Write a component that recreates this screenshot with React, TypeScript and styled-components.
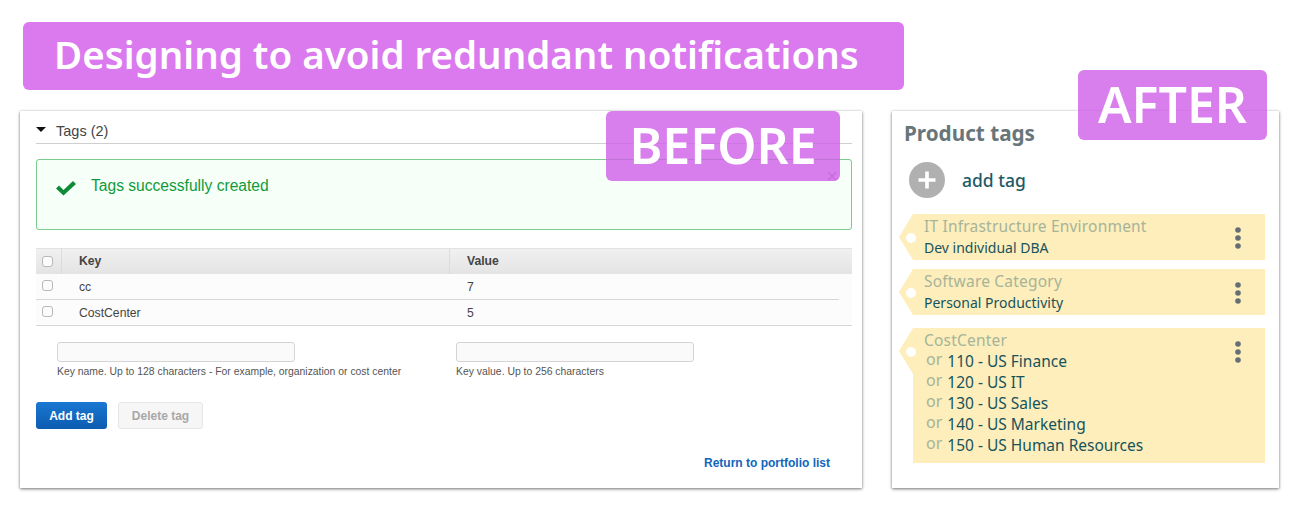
import styled, { createGlobalStyle } from 'styled-components'

const GlobalStyle = createGlobalStyle`
  html, body {
    margin: 0;
    padding: 0;
    background: #ffffff;
  }
`

const BADGE_BG = 'rgba(208, 94, 232, 0.8)'
const UI_SANS = '"Liberation Sans", Arial, sans-serif'
const TITLE_SANS = '"Noto Sans", "Open Sans", sans-serif'
const TAG_SANS = '"Noto Sans", "Open Sans", sans-serif'

const Page = styled.div`
  position: relative;
  width: 1296px;
  height: 512px;
  overflow: hidden;
  padding: 22px 0 0 20px;
  box-sizing: border-box;
`

const TitleBanner = styled.h1`
  width: 881px;
  height: 68px;
  margin: 0 0 21px 3px;
  padding: 0 0 4px 31px;
  box-sizing: border-box;
  display: flex;
  align-items: center;
  background: #da7aee;
  border-radius: 6px;
  color: #ffffff;
  font: 600 38.5px ${TITLE_SANS};
  white-space: nowrap;
`

const Cards = styled.div`
  display: flex;
  gap: 30px;
`

const Card = styled.section<{ $width: number }>`
  position: relative;
  width: ${(p) => p.$width}px;
  height: 377px;
  box-sizing: border-box;
  background: #ffffff;
  box-shadow: 0 1px 3px rgba(0, 0, 0, 0.55), 0 0 1px rgba(0, 0, 0, 0.12);
`

const Badge = styled.div<{ $top: number; $right: number; $width: number }>`
  position: absolute;
  top: ${(p) => p.$top}px;
  right: ${(p) => p.$right}px;
  width: ${(p) => p.$width}px;
  height: 70px;
  padding-bottom: 3px;
  box-sizing: border-box;
  display: flex;
  align-items: center;
  justify-content: center;
  background: ${BADGE_BG};
  border-radius: 6px;
  color: #ffffff;
  font: 600 50px ${TITLE_SANS};
`

const BeforeBody = styled.div`
  padding: 10px 10px 0 16px;
  font-family: ${UI_SANS};
  color: #444444;
`

const SectionHead = styled.div`
  display: flex;
  align-items: flex-start;
  height: 22px;
  line-height: 20px;
  border-bottom: 1px solid #cfcfcf;
  font-size: 14.5px;
  color: #444444;
`

const Caret = styled.span`
  width: 0;
  height: 0;
  margin: 6px 10px 0 0;
  border-left: 5.5px solid transparent;
  border-right: 5.5px solid transparent;
  border-top: 5px solid #111111;
`

const Alert = styled.div`
  position: relative;
  height: 71px;
  margin-top: 15px;
  box-sizing: border-box;
  padding: 17px 0 0 18px;
  display: flex;
  align-items: flex-start;
  gap: 14px;
  background: #f7fff9;
  border: 1px solid #7acb8c;
  border-radius: 3px;
  color: #0f9b3c;
  font-size: 15.6px;
  line-height: 18px;
`

const AlertClose = styled.span`
  position: absolute;
  top: 6px;
  right: 13px;
  font-size: 20px;
  line-height: 20px;
  color: #a9a9a9;
`

const Table = styled.div`
  margin-top: 18px;
  font-size: 12.2px;
`

const HeadRow = styled.div`
  display: grid;
  grid-template-columns: 25px 388px 1fr;
  height: 25px;
  align-items: center;
  border-top: 1px solid #e2e2e2;
  background: linear-gradient(#f0f0f0, #e4e4e4);
  font-weight: 700;
  color: #444444;
`

const HeadCell = styled.div`
  height: 100%;
  display: flex;
  align-items: center;
  padding: 0 0 1px 17px;
  box-sizing: border-box;
  border-left: 1px solid #dcdcdc;
`

const CheckCell = styled.div<{ $lift?: number }>`
  height: 100%;
  display: flex;
  align-items: center;
  padding: 0 0 ${(p) => p.$lift ?? 0}px 6px;
  box-sizing: border-box;
`

const Checkbox = styled.span`
  width: 9px;
  height: 9px;
  border: 1px solid #b8b8b8;
  border-radius: 3px;
  background: #fbfbfb;
`

const Row = styled.div<{ $inset?: boolean }>`
  position: relative;
  display: grid;
  grid-template-columns: 25px 388px 1fr;
  height: 26px;
  align-items: center;
  background: #fcfcfc;
  color: #444444;

  &::after {
    content: '';
    position: absolute;
    left: 0;
    right: ${(p) => (p.$inset ? 13 : 0)}px;
    bottom: 0;
    height: 1px;
    background: #d6d6d6;
  }
`

const RowCell = styled.div`
  padding-left: 18px;
`

const Fields = styled.div`
  display: grid;
  grid-template-columns: 399px 1fr;
  margin: 16px 0 0 21px;
`

const Field = styled.div`
  display: flex;
  flex-direction: column;
  gap: 3px;
`

const TextInput = styled.div`
  width: 238px;
  height: 20px;
  box-sizing: border-box;
  background: #fafafa;
  border: 1px solid #d4d4d4;
  border-radius: 3px;
`

const Hint = styled.div`
  font-size: 10.4px;
  line-height: 13px;
  color: #555555;
  white-space: nowrap;
`

const Buttons = styled.div`
  display: flex;
  gap: 11px;
  margin-top: 24px;
`

const PrimaryButton = styled.div`
  width: 71px;
  height: 27px;
  display: flex;
  align-items: center;
  justify-content: center;
  border-radius: 3px;
  background: linear-gradient(#1a78d2, #0b5cb0);
  color: #ffffff;
  font-size: 12px;
  font-weight: 700;
`

const DisabledButton = styled.div`
  width: 85px;
  height: 27px;
  box-sizing: border-box;
  display: flex;
  align-items: center;
  justify-content: center;
  border: 1px solid #e6e6e6;
  border-radius: 3px;
  background: #f6f6f6;
  color: #a8a8a8;
  font-size: 12px;
  font-weight: 700;
`

const FooterLink = styled.div`
  margin: 27px 22px 0 0;
  text-align: right;
  color: #1166bb;
  font-size: 12px;
  font-weight: 700;
`

const AfterBody = styled.div`
  padding: 9px 14px 0 7px;
  font-family: ${TAG_SANS};
`

const ProductTitle = styled.h2`
  margin: 0 0 0 5px;
  color: #68767a;
  font: 700 20.7px/26px ${TAG_SANS};
`

const AddRow = styled.div`
  display: flex;
  align-items: center;
  gap: 17px;
  margin: 16px 0 16px 10px;
  color: #1f5a66;
  font-size: 17.5px;
  font-weight: 500;
`

const Tag = styled.div<{ $gap?: number }>`
  position: relative;
  display: flex;
  justify-content: space-between;
  margin-bottom: ${(p) => p.$gap ?? 9}px;
  padding: 3px 23px 0 25px;
  min-height: 46px;
  box-sizing: border-box;
  background: #fdeebb;
  clip-path: polygon(14px 0, 100% 0, 100% 100%, 14px 100%, 14px 46px, 0 23px);
`

const TagHole = styled.span`
  position: absolute;
  left: 7px;
  top: 19px;
  width: 10px;
  height: 10px;
  border-radius: 50%;
  background: #ffffff;
`

const TagKey = styled.div`
  color: #a6b49a;
  font-size: 15.5px;
  line-height: 19px;
  letter-spacing: 0.2px;
`

const TagValue = styled.div`
  color: #17535c;
  font-size: 14px;
  line-height: 24px;
`

const OrList = styled.div`
  margin: 1px 0 7px;
`

const OrRow = styled.div`
  display: flex;
  align-items: baseline;
  gap: 5px;
  height: 21px;
  line-height: 21px;
  margin-left: 2px;
  color: #17535c;
  font-size: 15.5px;
`

const OrWord = styled.span`
  color: #a6b49a;
  font-size: 16px;
  line-height: 16px;
  transform: translateY(-2px);
`

function CheckIcon(): JSX.Element {
  return (
    <svg width="22" height="16" viewBox="0 0 22 16" style={{ marginTop: 3 }}>
      <path d="M1 8.5 L4 5.5 L8.5 10 L18 1 L21 4 L8.5 15.5 Z" fill="#0e8a38" />
    </svg>
  )
}

function PlusCircle(): JSX.Element {
  return (
    <svg width="36" height="36" viewBox="0 0 36 36">
      <circle cx="18" cy="18" r="18" fill="#b0b0b0" />
      <path d="M18 9.5 V26.5 M9.5 18 H26.5" stroke="#ffffff" strokeWidth="3.6" />
    </svg>
  )
}

function Kebab(): JSX.Element {
  return (
    <svg width="8" height="24" viewBox="0 0 8 24" style={{ marginTop: 9, flexShrink: 0 }}>
      <circle cx="4" cy="4" r="2.8" fill="#666e75" />
      <circle cx="4" cy="12" r="2.8" fill="#666e75" />
      <circle cx="4" cy="20" r="2.8" fill="#666e75" />
    </svg>
  )
}

const costCenters = ['110 - US Finance', '120 - US IT', '130 - US Sales', '140 - US Marketing', '150 - US Human Resources']

export default function App(): JSX.Element {
  return (
    <Page>
      <GlobalStyle />
      <TitleBanner>Designing to avoid redundant notifications</TitleBanner>
      <Cards>
        <Card $width={842}>
          <BeforeBody>
            <SectionHead>
              <Caret />
              Tags (2)
            </SectionHead>
            <Alert>
              <CheckIcon />
              Tags successfully created
              <AlertClose>×</AlertClose>
            </Alert>
            <Table>
              <HeadRow>
                <CheckCell><Checkbox /></CheckCell>
                <HeadCell>Key</HeadCell>
                <HeadCell>Value</HeadCell>
              </HeadRow>
              <Row $inset>
                <CheckCell $lift={3}><Checkbox /></CheckCell>
                <RowCell>cc</RowCell>
                <RowCell>7</RowCell>
              </Row>
              <Row>
                <CheckCell $lift={3}><Checkbox /></CheckCell>
                <RowCell>CostCenter</RowCell>
                <RowCell>5</RowCell>
              </Row>
            </Table>
            <Fields>
              <Field>
                <TextInput />
                <Hint>Key name. Up to 128 characters - For example, organization or cost center</Hint>
              </Field>
              <Field>
                <TextInput />
                <Hint>Key value. Up to 256 characters</Hint>
              </Field>
            </Fields>
            <Buttons>
              <PrimaryButton>Add tag</PrimaryButton>
              <DisabledButton>Delete tag</DisabledButton>
            </Buttons>
            <FooterLink>Return to portfolio list</FooterLink>
          </BeforeBody>
          <Badge $top={0} $right={22} $width={234}>BEFORE</Badge>
        </Card>
        <Card $width={387}>
          <AfterBody>
            <ProductTitle>Product tags</ProductTitle>
            <AddRow>
              <PlusCircle />
              add tag
            </AddRow>
            <Tag>
              <TagHole />
              <div>
                <TagKey>IT Infrastructure Environment</TagKey>
                <TagValue>Dev individual DBA</TagValue>
              </div>
              <Kebab />
            </Tag>
            <Tag $gap={13}>
              <TagHole />
              <div>
                <TagKey>Software Category</TagKey>
                <TagValue>Personal Productivity</TagValue>
              </div>
              <Kebab />
            </Tag>
            <Tag>
              <TagHole />
              <div>
                <TagKey>CostCenter</TagKey>
                <OrList>
                  {costCenters.map((c) => (
                    <OrRow key={c}>
                      <OrWord>or</OrWord>
                      {c}
                    </OrRow>
                  ))}
                </OrList>
              </div>
              <Kebab />
            </Tag>
          </AfterBody>
          <Badge $top={-41} $right={12} $width={189}>AFTER</Badge>
        </Card>
      </Cards>
    </Page>
  )
}
